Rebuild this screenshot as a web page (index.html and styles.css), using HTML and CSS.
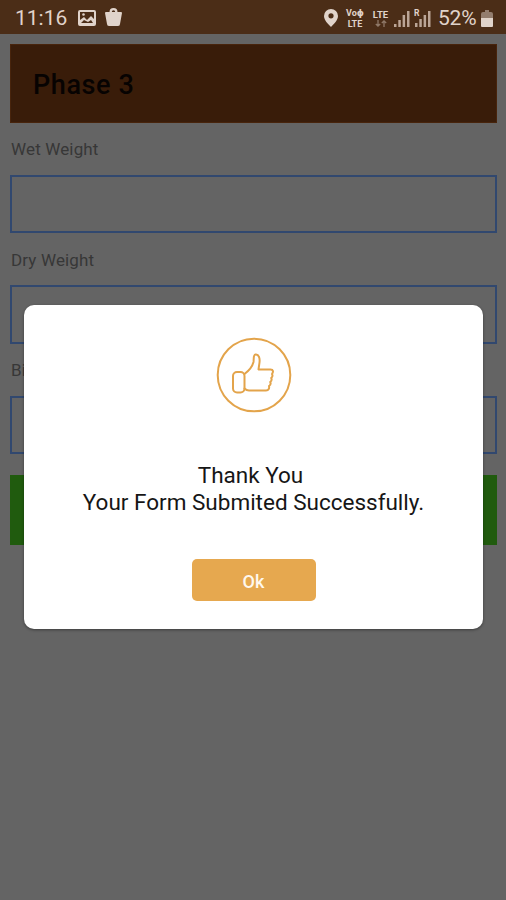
FILE: index.html
```html
<!DOCTYPE html>
<html lang="en">
<head>
<meta charset="utf-8">
<title>Phase 3</title>
<link rel="stylesheet" href="styles.css">
</head>
<body>
<div class="screen">
  <header class="status">
    <span class="time">11:16</span>
    <svg class="picture" width="18" height="16" viewBox="0 0 18 16"><path fill-rule="evenodd" d="M2 0h14a2 2 0 0 1 2 2v12a2 2 0 0 1-2 2H2a2 2 0 0 1-2-2V2a2 2 0 0 1 2-2zM2 2v8l4-3 3 3 4-4 3 3V2zM3 13h12l-2-3-3 2-4-2z"/><circle cx="5.5" cy="4.5" r="1.3"/></svg>
    <svg class="bag" width="17" height="18" viewBox="0 0 17 18"><path fill-rule="evenodd" d="M1 4h3.500a4 4 0 0 1 8 0H16a1 1 0 0 1 1 1l-2 11a2 2 0 0 1-2 2H4a2 2 0 0 1-2-2L0 5a1 1 0 0 1 1-1zM6.800 4h3.400a1.700 1.700 0 0 0-3.400 0z"/></svg>
    <span class="grow"></span>
    <svg class="pin" width="14" height="18" viewBox="0 0 14 18"><path fill-rule="evenodd" d="M7 0a7 7 0 0 1 7 7c0 4-4 8-7 11-3-3-7-7-7-11a7 7 0 0 1 7-7zM7 4.200a2.600 2.600 0 1 0 0 5.200 2.600 2.600 0 0 0 0-5.200z"/></svg>
    <span class="net volte"><span>Vo&#981;</span><span>LTE</span></span>
    <span class="net lte"><span>LTE</span><svg width="12" height="7" viewBox="0 0 12 7"><path class="arrows" d="M3 0v6M.8 4L3 6l2.200-2M9 7V1M6.800 3L9 1l2.200 2"/></svg></span>
    <svg class="signal" width="16" height="17" viewBox="0 0 16 17"><path d="M0 14h2.500v3H0zM4.300 10h2.500v7H4.300zM8.600 5h2.500v12H8.600zM13 1h2.500v16H13z"/></svg>
    <svg class="signal second" width="17" height="19" viewBox="0 0 17 19"><path d="M1 15h2.500v4H1zM5.300 11h2.500v8H5.300zM9.600 7h2.500v12H9.600zM14 3h2.500v16H14z"/><text x="0" y="8">R</text></svg>
    <span class="percent">52%</span>
    <svg class="battery" width="12" height="17" viewBox="0 0 12 17"><path class="low" d="M4 0h4v2h2a2 2 0 0 1 2 2v4H0V4a2 2 0 0 1 2-2h2z"/><path d="M0 8h12v8a1 1 0 0 1-1 1H1a1 1 0 0 1-1-1z"/></svg>
  </header>
  <main class="form">
    <h1>Phase 3</h1>
    <label>Wet Weight</label><div class="field"></div>
    <label>Dry Weight</label><div class="field"></div>
    <label>Bio Weight</label><div class="field"></div>
    <div class="submit"></div>
  </main>
  <section class="dialog">
    <svg class="thumb" width="76" height="76" viewBox="0 0 76 76"><circle cx="38" cy="38" r="36.300"/><rect x="17" y="35" width="11.500" height="20.500" rx="4"/><path d="M28.500 37c4-3 8-8 9-12 .5-3-.5-7 2-7.500 3.500-.5 4.500 4 4 8l-1 7h12c3 0 3 2.500 1.500 4.500.8 1.500.5 3-.8 4 .8 1.500.3 3-1 4 .8 1.500.3 3-1.200 4 .5 2-.2 4.500-3 4.500H33c-2.500 0-3-.5-4.500-2"/></svg>
    <p><span class="thanks">Thank You</span><br>Your Form Submited Successfully.</p>
    <button>Ok</button>
  </section>
</div>
</body>
</html>
```

FILE: styles.css
```css
* { box-sizing: border-box; }
body { margin: 0; font-family: Roboto, "Liberation Sans", sans-serif; }
.screen { position: relative; width: 506px; height: 900px; background: #646464; overflow: hidden; }
.status { display: flex; align-items: center; height: 34px; padding: 2px 13px 0 15px; background: #4b2d17; color: #e0d3ca; fill: #e0d3ca; }
.status svg { flex: none; display: block; }
.time { width: 63px; font-size: 21px; white-space: nowrap; }
.bag { margin-left: 9px; margin-top: -2px; }
.grow { flex: 1; }
.pin { margin-right: 8px; }
.net { display: flex; flex-direction: column; align-items: center; flex: none; font-size: 9.500px; line-height: 10px; font-weight: 700; }
.volte { width: 18px; margin-right: 8px; font-size: 9px; font-family: Roboto, "DejaVu Sans", sans-serif; }
.volte span + span { margin-top: 1px; }
.lte { width: 17px; margin-right: 5px; }
.arrows { fill: none; stroke: #8f7968; stroke-width: 1.300; }
.signal { margin-right: 4px; }
.second { margin-right: 7px; margin-top: -2px; }
.signal text { font-size: 8.500px; font-weight: 700; }
.signal path { fill: #bba596; }
.percent { width: 43px; font-size: 21px; letter-spacing: -.2px; white-space: nowrap; }
.low { fill: #937d6e; }
.form { display: flex; flex-direction: column; padding: 10px 9px 0 10px; }
h1 { margin: 0 0 13px; height: 79px; padding-left: 22px; background: #391c09; border: 1px solid #48240c; color: #070302; font-size: 27px; line-height: 80px; font-weight: 500; letter-spacing: .6px; }
label { height: 38.500px; padding-left: 1px; line-height: 27px; font-size: 17px; color: #373737; letter-spacing: .15px; }
.field { height: 58.500px; margin-bottom: 13.500px; border: 2px solid #31486f; }
.submit { height: 70px; margin-top: 7px; background: #205b0e; }
.dialog { position: absolute; left: 24px; top: 305px; width: 459px; height: 324px; display: flex; flex-direction: column; align-items: center; padding-top: 32px; border-radius: 10px; background: #fff; box-shadow: 0 1px 3px rgba(0,0,0,.4); }
.thumb { fill: none; stroke: #e3a44b; stroke-width: 2; stroke-linejoin: round; stroke-linecap: round; }
p { margin: 49px 0 0; text-align: center; font-size: 22.500px; line-height: 27px; color: #161616; white-space: nowrap; }
.thanks { margin-right: 6px; }
button { width: 124px; height: 42px; margin-top: 43px; padding: 2px 0 0; border: 0; border-radius: 5px; background: #e6a84f; color: #fff8ee; font: 500 18px Roboto, sans-serif; }
```
